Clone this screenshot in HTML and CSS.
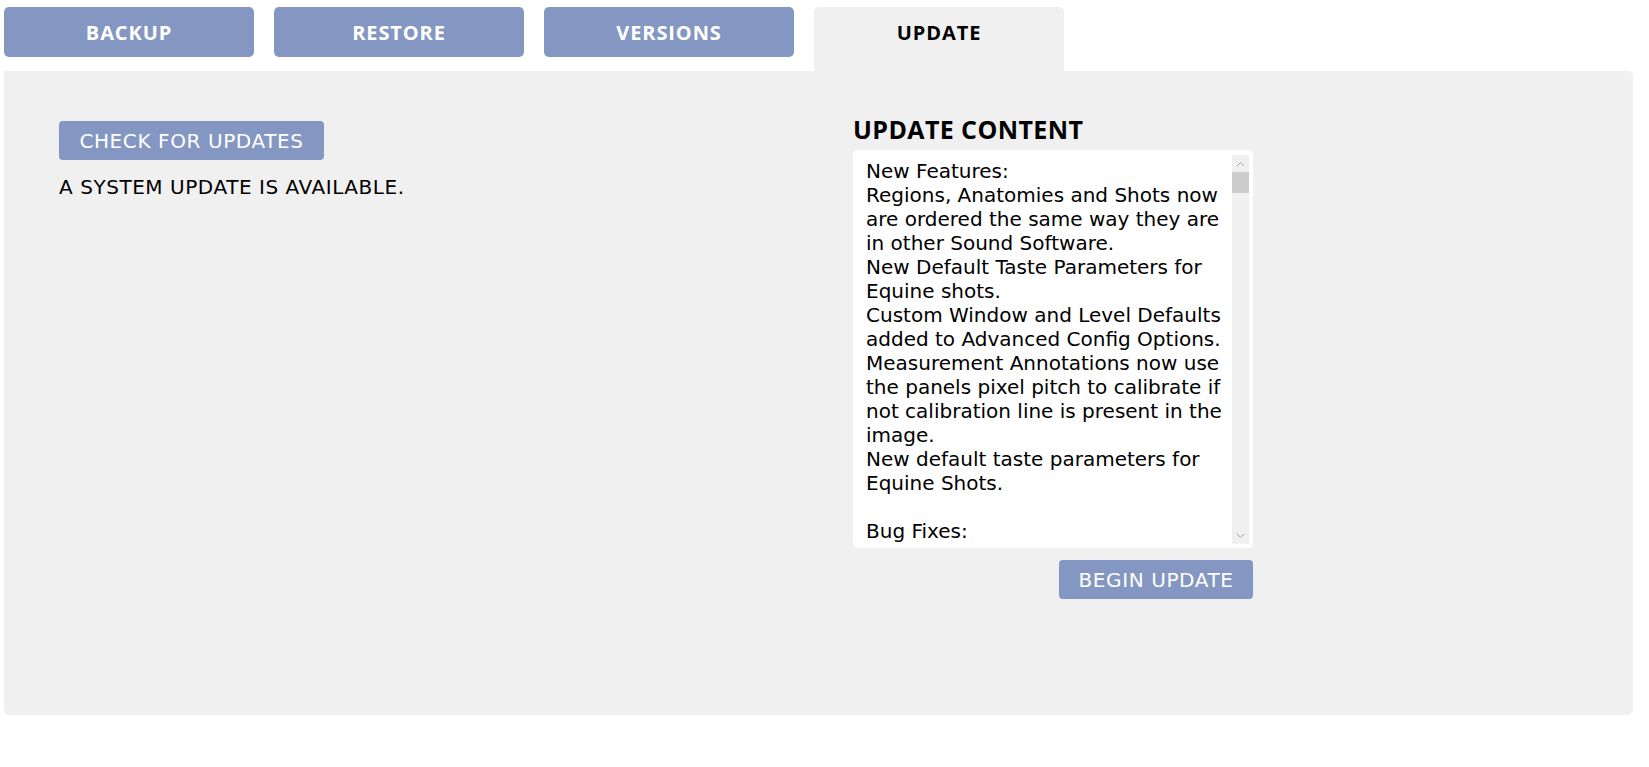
FILE: index.html
```html
<!DOCTYPE html>
<html lang="en">
<head>
    <meta charset="UTF-8">
    <meta name="viewport" content="width=device-width, initial-scale=1.0">
    <title>System Update</title>
    <link rel="stylesheet" href="styles.css">
</head>
<body>
    <div class="page">
        <nav class="tabs">
            <button class="tab">BACKUP</button>
            <button class="tab">RESTORE</button>
            <button class="tab">VERSIONS</button>
            <button class="tab active">UPDATE</button>
        </nav>

        <main class="panel">
            <section class="check-col">
                <button class="btn">CHECK FOR UPDATES</button>
                <p class="status">A SYSTEM UPDATE IS AVAILABLE.</p>
            </section>

            <section class="content-col">
                <h2 class="content-title">UPDATE CONTENT</h2>
                <div class="notes-box">
                    <div class="notes">New Features:
Regions, Anatomies and Shots now are ordered the same way they are in other Sound Software.
New Default Taste Parameters for Equine shots.
Custom Window and Level Defaults added to Advanced Config Options.
Measurement Annotations now use the panels pixel pitch to calibrate if not calibration line is present in the image.
New default taste parameters for Equine Shots.

Bug Fixes:
Fixed an issue where the study list would not refresh after a backup.</div>
                    <!-- scrollbar drawn by hand so it shows in every browser -->
                    <div class="scrollbar">
                        <div class="scroll-arrow">
                            <svg width="9" height="6" viewBox="0 0 9 6"><path d="M1 5 L4.5 1.5 L8 5" fill="none" stroke="#a3a3a3" stroke-width="1"/></svg>
                        </div>
                        <div class="scroll-track"><div class="scroll-thumb"></div></div>
                        <div class="scroll-arrow">
                            <svg width="9" height="6" viewBox="0 0 9 6"><path d="M1 1 L4.5 4.5 L8 1" fill="none" stroke="#a3a3a3" stroke-width="1"/></svg>
                        </div>
                    </div>
                </div>
                <div class="actions">
                    <button class="btn">BEGIN UPDATE</button>
                </div>
            </section>
        </main>
    </div>
</body>
</html>
```

FILE: styles.css
```css
/* General */
body {
    margin: 0;
    font-family: "DejaVu Sans", "Open Sans", sans-serif;
    background-color: #fff;
    color: #000;
}

.page {
    padding: 7px 16px 0 4px;
}

/* Tab bar */
.tabs {
    display: flex;
    align-items: flex-start;
    gap: 20px;
    height: 64px;
}

.tab {
    width: 250px;
    height: 50px;
    border: none;
    border-radius: 5px;
    background-color: #8497c2;
    color: #fff;
    font-family: "Open Sans", sans-serif;
    font-size: 20px;
    font-weight: 700;
    letter-spacing: 0.9px;
    cursor: pointer;
}

.tab.active {
    height: 64px;
    padding-bottom: 15px;
    border-radius: 5px 5px 0 0;
    background-color: #f0f0f0;
    color: #000;
}

/* Main panel */
.panel {
    display: flex;
    height: 644px;
    box-sizing: border-box;
    padding: 50px 55px;
    background-color: #f0f0f0;
    border-radius: 0 5px 5px 5px;
}

.check-col {
    width: 794px;
    flex: none;
}

.btn {
    height: 39px;
    padding: 0 8px;
    border: none;
    border-radius: 4px;
    background-color: #8497c2;
    color: #fff;
    font-family: inherit;
    font-size: 20px;
    letter-spacing: 0.6px;
    cursor: pointer;
}

.check-col .btn {
    width: 265px;
}

.status {
    margin: 15px 0 0;
    font-size: 20px;
    line-height: 24px;
    letter-spacing: 0.55px;
}

/* Update content */
.content-col {
    width: 400px;
    flex: none;
}

.content-title {
    margin: -6px 0 6px;
    font-family: "Open Sans", sans-serif;
    font-size: 25px;
    line-height: 29px;
    font-weight: 700;
    letter-spacing: 0.4px;
}

.notes-box {
    display: flex;
    height: 398px;
    box-sizing: border-box;
    padding: 5px 4px 4px 13px;
    background-color: #fff;
    border-radius: 5px;
}

.notes {
    flex: 1;
    overflow: hidden;
    white-space: pre-line;
    font-size: 20px;
    line-height: 24px;
    padding-top: 4px;
}

/* Scrollbar */
.scrollbar {
    display: flex;
    flex-direction: column;
    width: 17px;
    flex: none;
    background-color: #f0f0f0;
}

.scroll-arrow {
    display: flex;
    align-items: center;
    justify-content: center;
    height: 17px;
}

.scroll-track {
    flex: 1;
}

.scroll-thumb {
    height: 21px;
    background-color: #cdcdcd;
}

.actions {
    display: flex;
    justify-content: flex-end;
    margin-top: 12px;
}

.actions .btn {
    width: 194px;
}
```
